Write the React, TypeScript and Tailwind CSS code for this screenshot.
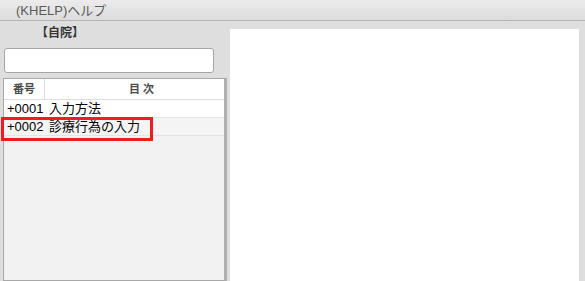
export default function App() {
  const rows = [
    { no: '+0001', title: '入力方法', bg: 'bg-white' },
    { no: '+0002', title: '診療行為の入力', bg: 'bg-[#f4f4f4]' },
  ];
  return (
    <div className="relative w-[585px] h-[281px] overflow-hidden bg-[#dedede] font-['Liberation_Sans','Noto_Sans_CJK_JP',sans-serif] text-black">
      {/* title bar */}
      <div className="h-[21px] bg-gradient-to-b from-[#ececec] to-[#dcdcdc] border-b border-[#b4b4b4] flex items-center pl-[16px]">
        <span className="text-[13px] text-[#5a5a5a] leading-none">(KHELP)ヘルプ</span>
      </div>

      <div className="flex h-[260px]">
        {/* left column */}
        <div className="w-[230px] flex flex-col pl-[3px]">
          <div className="h-[14px] mt-[5px] pl-[33px] text-[12px] font-bold text-[#333] leading-[14px]">【自院】</div>
          <div className="mt-[8px] ml-[1px] w-[210px] h-[25px] bg-white border border-[#a6a6a6] rounded-[3px]" />
          <div className="mt-[5px] w-[224px] flex-1 bg-[#f2f2f2] border border-[#a8a8a8] border-r-[3px] border-r-[#b0b0b0]">
            <div className="flex h-[21px] bg-white border-b border-[#dcdcdc] text-[11px] font-semibold text-[#4a4a4a] leading-none">
              <div className="w-[41px] flex items-center justify-center border-r border-[#dcdcdc]">番号</div>
              <div className="flex-1 flex items-center justify-center pl-[14px]">目 次</div>
            </div>
            {rows.map(r => (
              <div key={r.no} className={`flex h-[18px] items-center border-b border-[#e4e4e4] text-[13px] leading-none ${r.bg}`}>
                <div className="w-[41px] pl-[3px]">{r.no}</div>
                <div className="flex-1 pl-[4px]">{r.title}</div>
              </div>
            ))}
          </div>
        </div>

        {/* right content */}
        <div className="mt-[8px] w-[349px] bg-white" />
      </div>

      {/* red highlight */}
      <div className="absolute left-[1px] top-[117px] w-[152px] h-[24px] border-[3px] border-[#ee1c24]" />
    </div>
  );
}
